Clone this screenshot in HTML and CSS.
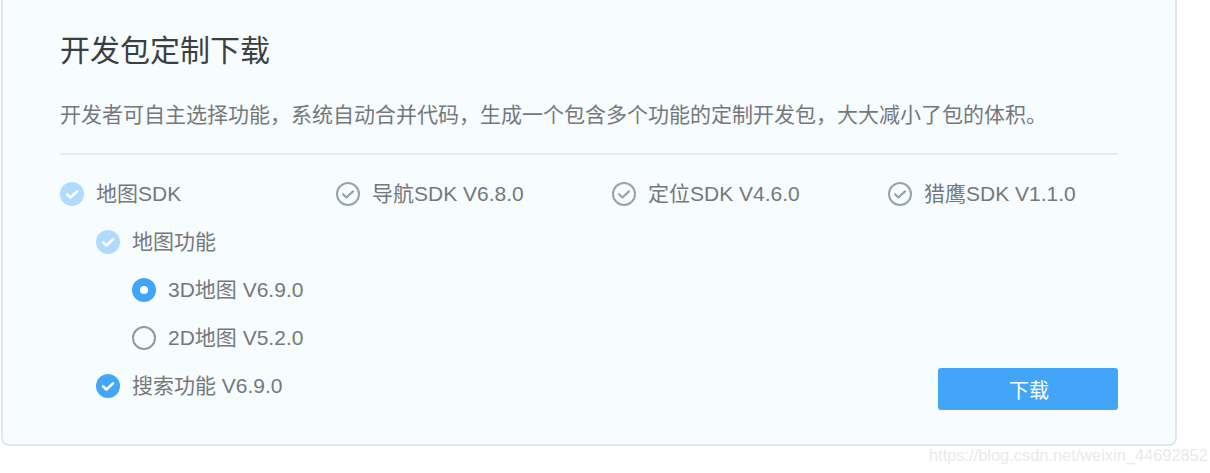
FILE: index.html
```html
<!DOCTYPE html>
<html lang="zh-CN">
<head>
<meta charset="utf-8">
<title>开发包定制下载</title>
<link rel="stylesheet" href="styles.css">
</head>
<body>
<main class="card">
  <h1 class="title">开发包定制下载</h1>
  <p class="desc">开发者可自主选择功能，系统自动合并代码，生成一个包含多个功能的定制开发包，大大减小了包的体积。</p>
  <hr class="divider">
  <div class="content">
    <div class="sdk-grid">
      <div class="sdk-col">
        <div class="opt">
          <svg class="ico" viewBox="0 0 24 24"><circle class="fill-light" cx="12" cy="12" r="12"/><path class="tick-white" d="M7 12.3l3.4 3.2L17 9.4"/></svg>
          <span>地图SDK</span>
        </div>
        <div class="nest">
          <div class="opt">
            <svg class="ico" viewBox="0 0 24 24"><circle class="fill-light" cx="12" cy="12" r="12"/><path class="tick-white" d="M7 12.3l3.4 3.2L17 9.4"/></svg>
            <span>地图功能</span>
          </div>
          <div class="nest">
            <div class="opt">
              <svg class="ico" viewBox="0 0 24 24"><circle class="fill-blue" cx="12" cy="12" r="12"/><circle class="dot" cx="12" cy="12" r="4"/></svg>
              <span>3D地图 V6.9.0</span>
            </div>
            <div class="opt">
              <svg class="ico" viewBox="0 0 24 24"><circle class="ring-gray" cx="12" cy="12" r="11"/></svg>
              <span>2D地图 V5.2.0</span>
            </div>
          </div>
          <div class="opt">
            <svg class="ico" viewBox="0 0 24 24"><circle class="fill-blue" cx="12" cy="12" r="12"/><path class="tick-white" d="M7 12.3l3.4 3.2L17 9.4"/></svg>
            <span>搜索功能 V6.9.0</span>
          </div>
        </div>
      </div>
      <div class="sdk-col">
        <div class="opt">
          <svg class="ico" viewBox="0 0 24 24"><circle class="ring-slate" cx="12" cy="12" r="11"/><path class="tick-slate" d="M7 12.3l3.4 3.2L17 9.4"/></svg>
          <span>导航SDK V6.8.0</span>
        </div>
      </div>
      <div class="sdk-col">
        <div class="opt">
          <svg class="ico" viewBox="0 0 24 24"><circle class="ring-slate" cx="12" cy="12" r="11"/><path class="tick-slate" d="M7 12.3l3.4 3.2L17 9.4"/></svg>
          <span>定位SDK V4.6.0</span>
        </div>
      </div>
      <div class="sdk-col sdk-last">
        <div class="opt">
          <svg class="ico" viewBox="0 0 24 24"><circle class="ring-slate" cx="12" cy="12" r="11"/><path class="tick-slate" d="M7 12.3l3.4 3.2L17 9.4"/></svg>
          <span>猎鹰SDK V1.1.0</span>
        </div>
        <button class="download" type="button">下载</button>
      </div>
    </div>
  </div>
</main>
<footer class="watermark">https://blog.csdn.net/weixin_44692852</footer>
</body>
</html>
```
FILE: styles.css
```css
* { box-sizing: border-box; }
html, body { margin: 0; height: 100%; overflow: hidden; background: #fff; }
body {
  font-family: "Liberation Sans", "Noto Sans CJK SC", sans-serif;
  color: #75787b;
}
.card {
  width: 1176px;
  height: 446px;
  margin-left: 1px;
  padding: 31px 57px 0 57px;
  background: #f7fcff;
  border: 2px solid #e3e5e7;
  border-top: 0;
  border-radius: 0 0 8px 8px;
}
.title {
  margin: 0;
  font-size: 30px;
  line-height: 40px;
  font-weight: 400;
  color: #3c3f42;
}
.desc {
  margin: 24px 0 0;
  font-size: 21px;
  line-height: 40px;
  white-space: nowrap;
}
.divider {
  margin: 18px 0 0;
  border: 0;
  height: 2px;
  background: #e9ebed;
}
.content { padding-top: 15px; }
.sdk-grid {
  display: grid;
  grid-template-columns: repeat(3, 276px) 230px;
}
.sdk-last { display: flex; flex-direction: column; }
.opt {
  display: flex;
  align-items: center;
  gap: 12px;
  height: 48px;
  font-size: 21px;
  line-height: 48px;
  white-space: nowrap;
}
.ico { width: 24px; height: 24px; flex: none; display: block; margin-top: -1px; }
.nest { padding-left: 36px; }
.fill-light { fill: #aedbff; }
.fill-blue { fill: #42a5f8; }
.dot { fill: #fff; }
.ring-gray { fill: none; stroke: #96999c; stroke-width: 2; }
.ring-slate { fill: none; stroke: #96a3ad; stroke-width: 2; }
.tick-white { fill: none; stroke: #fff; stroke-width: 2.6; stroke-linecap: round; stroke-linejoin: round; }
.tick-slate { fill: none; stroke: #96a3ad; stroke-width: 2.2; stroke-linecap: round; stroke-linejoin: round; }
.download {
  align-self: flex-start;
  width: 180px;
  height: 42px;
  margin: 150px 0 0 50px;
  padding: 0 0 0 2px;
  border: 0;
  border-radius: 3px;
  background: #42a5f8;
  color: #fff;
  font: inherit;
  font-size: 20px;
}
.watermark {
  position: absolute;
  left: 929px;
  top: 445px;
  font-size: 16.4px;
  line-height: 20px;
  color: #e8eaec;
  white-space: nowrap;
}
```
